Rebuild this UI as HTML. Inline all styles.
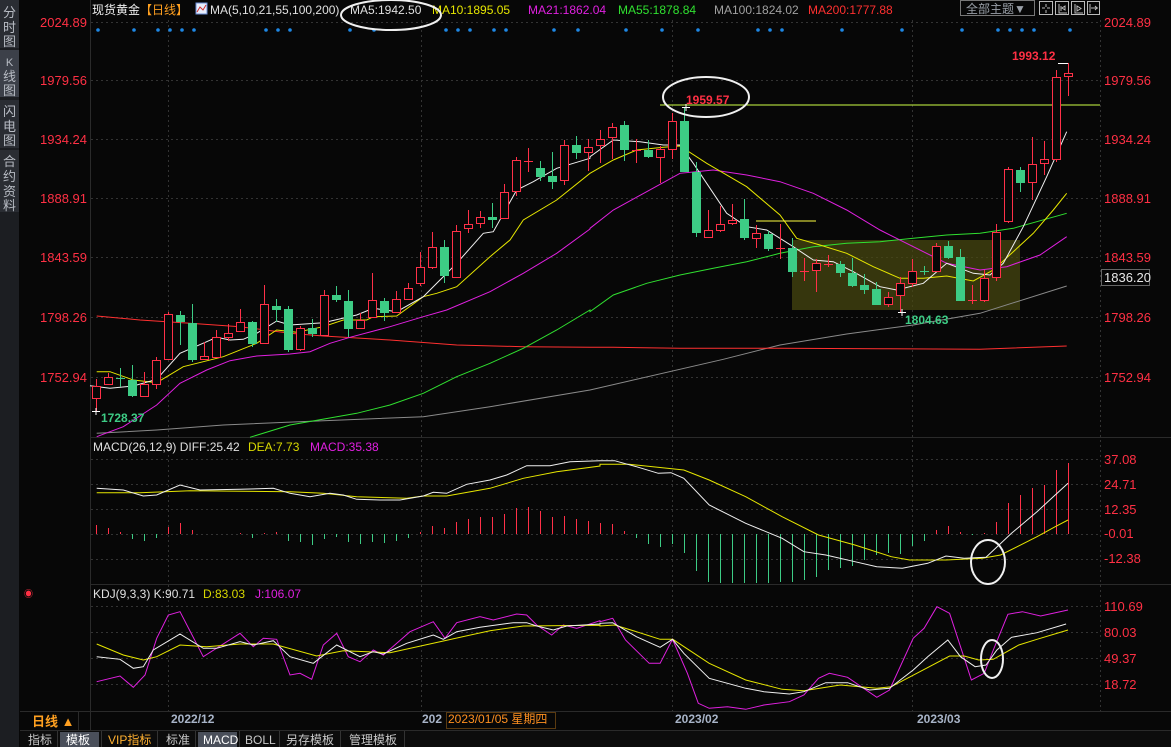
<!DOCTYPE html>
<html><head><meta charset="utf-8">
<style>
html,body{margin:0;padding:0;background:#070707;width:1171px;height:747px;overflow:hidden;font-family:"Liberation Sans","Noto Sans CJK SC",sans-serif}
svg{position:absolute;left:0;top:0}
text{font-family:"Liberation Sans","Noto Sans CJK SC",sans-serif}
</style></head><body>
<svg id="s" width="1171" height="747" viewBox="0 0 1171 747" xmlns="http://www.w3.org/2000/svg">
<rect width="1171" height="747" fill="#070707"/>
<!-- left strip -->
<rect x="0" y="0" width="19" height="747" fill="#1c1e22"/>
<rect x="0" y="0" width="19" height="48" fill="#2a2d33"/>
<rect x="0" y="50" width="19" height="47" fill="#3c4049"/>
<rect x="0" y="100" width="19" height="48" fill="#2a2d33"/>
<rect x="0" y="150" width="19" height="62" fill="#2a2d33"/>
<g fill="#b8bcc4" font-size="13" text-anchor="middle">
<text x="9.5" y="17">分</text><text x="9.5" y="32">时</text><text x="9.5" y="46">图</text>
<text x="9.5" y="66" font-size="11">K</text><text x="9.5" y="81">线</text><text x="9.5" y="95">图</text>
<text x="9.5" y="116">闪</text><text x="9.5" y="131">电</text><text x="9.5" y="145">图</text>
<text x="9.5" y="166">合</text><text x="9.5" y="181">约</text><text x="9.5" y="196">资</text><text x="9.5" y="210">料</text>
</g>
<!-- borders -->
<line x1="90.5" y1="0" x2="90.5" y2="731" stroke="#2a2a2a"/>
<line x1="90" y1="437.5" x2="1171" y2="437.5" stroke="#2a2a2a"/>
<line x1="90" y1="584.5" x2="1171" y2="584.5" stroke="#2a2a2a"/>
<line x1="20" y1="711.5" x2="1171" y2="711.5" stroke="#2a2a2a"/>
<line x1="20" y1="730.5" x2="1171" y2="730.5" stroke="#2a2a2a"/>
<g id="grid" stroke="#333" stroke-dasharray="2,3"></g>
<g id="main"></g>
<!-- y labels -->
<g fill="#ff3044" font-size="13">
<text x="87" y="27" text-anchor="end">2024.89</text>
<text x="87" y="85" text-anchor="end">1979.56</text>
<text x="87" y="144" text-anchor="end">1934.24</text>
<text x="87" y="203" text-anchor="end">1888.91</text>
<text x="87" y="262" text-anchor="end">1843.59</text>
<text x="87" y="322" text-anchor="end">1798.26</text>
<text x="87" y="382" text-anchor="end">1752.94</text>
<text x="1104" y="27">2024.89</text>
<text x="1104" y="85">1979.56</text>
<text x="1104" y="144">1934.24</text>
<text x="1104" y="203">1888.91</text>
<text x="1104" y="262">1843.59</text>
<text x="1104" y="322">1798.26</text>
<text x="1104" y="382">1752.94</text>
<text x="1104" y="464">37.08</text>
<text x="1104" y="489">24.71</text>
<text x="1104" y="514">12.35</text>
<text x="1104" y="538">-0.01</text>
<text x="1104" y="563">-12.38</text>
<text x="1104" y="611">110.69</text>
<text x="1104" y="637">80.03</text>
<text x="1104" y="663">49.37</text>
<text x="1104" y="689">18.72</text>
</g>
<rect x="1101.5" y="269.5" width="48" height="16" fill="#070707" stroke="#666"/>
<text x="1104" y="282" fill="#e8e8e8" font-size="13">1836.20</text>
<!-- header -->
<text x="92" y="14" fill="#f0f0f0" font-size="12">现货黄金</text>
<text x="140" y="14" fill="#ffa020" font-size="12">【日线】</text>
<rect x="196" y="3" width="11" height="11" fill="#e8eefc" stroke="#6b8ed6"/>
<polyline points="197,12 200,7 203,10 206,5" fill="none" stroke="#d03030" stroke-width="1"/>
<text x="210" y="14" fill="#e0e0e0" font-size="12">MA(5,10,21,55,100,200)</text>
<text x="350" y="14" fill="#e0e0e0" font-size="12">MA5:1942.50</text>
<text x="432" y="14" fill="#e6e600" font-size="12">MA10:1895.05</text>
<text x="528" y="14" fill="#e020e0" font-size="12">MA21:1862.04</text>
<text x="618" y="14" fill="#30e030" font-size="12">MA55:1878.84</text>
<text x="714" y="14" fill="#a0a0a0" font-size="12">MA100:1824.02</text>
<text x="808" y="14" fill="#ff3030" font-size="12">MA200:1777.88</text>
<ellipse cx="391" cy="15" rx="50" ry="15" fill="none" stroke="#f0f0f0" stroke-width="2"/>
<!-- top right -->
<rect x="960.5" y="0.5" width="74" height="15" fill="none" stroke="#777"/>
<text x="966" y="13" fill="#9aa0a8" font-size="12">全部主题▼</text>
<g fill="none" stroke="#bbb">
<rect x="1039.5" y="1.5" width="13" height="13"/><rect x="1055.5" y="1.5" width="13" height="13"/><rect x="1071.5" y="1.5" width="13" height="13"/><rect x="1087.5" y="1.5" width="12" height="13"/>
<path d="M1046 4v3M1046 10v3M1042 8h3M1047 8h3M1059 4v9h8M1061 6v5M1062 8l3-2v4zM1075 4v9h8M1077 6v5l4-2.5zM1090 4v9M1091 8h7M1095 6l2 2-2 2"/>
</g>
<text x="101" y="422" fill="#3dcc85" font-size="12" font-weight="bold">1728.37</text>
<text x="686" y="104" fill="#ff3044" font-size="12" font-weight="bold">1959.57</text>
<text x="1012" y="60" fill="#ff3044" font-size="12" font-weight="bold">1993.12</text>
<text x="905" y="324" fill="#3dcc85" font-size="12" font-weight="bold">1804.63</text>
<ellipse cx="706" cy="97" rx="43" ry="20" fill="none" stroke="#f0f0f0" stroke-width="2"/>
<!-- indicator labels -->
<text x="93" y="451" fill="#e0e0e0" font-size="12">MACD(26,12,9) DIFF:25.42</text>
<text x="248" y="451" fill="#d8d800" font-size="12">DEA:7.73</text>
<text x="310" y="451" fill="#e020e0" font-size="12">MACD:35.38</text>
<text x="93" y="598" fill="#e0e0e0" font-size="12">KDJ(9,3,3) K:90.71</text>
<text x="203" y="598" fill="#d8d800" font-size="12">D:83.03</text>
<text x="255" y="598" fill="#e020e0" font-size="12">J:106.07</text>
<text x="24" y="597" fill="#ff3044" font-size="9">◉</text>
<ellipse cx="988" cy="562" rx="17" ry="22" fill="none" stroke="#f0f0f0" stroke-width="2"/>
<ellipse cx="992" cy="659" rx="11" ry="19" fill="none" stroke="#f0f0f0" stroke-width="2"/>
<!-- bottom -->
<text x="32" y="726" fill="#ffa020" font-size="13" font-weight="bold">日线 ▲</text>
<line x1="78.5" y1="712" x2="78.5" y2="730" stroke="#2a2a2a"/>
<text x="171" y="723" fill="#a8b4c8" font-size="12" font-weight="bold">2022/12</text>
<text x="422" y="723" fill="#a8b4c8" font-size="12" font-weight="bold">202</text>
<rect x="446.5" y="712.5" width="109" height="16" fill="#070707" stroke="#5a3a10"/>
<text x="448" y="723" fill="#ff9020" font-size="12">2023/01/05 星期四</text>
<text x="675" y="723" fill="#a8b4c8" font-size="12" font-weight="bold">2023/02</text>
<text x="917" y="723" fill="#a8b4c8" font-size="12" font-weight="bold">2023/03</text>
<rect x="20" y="731" width="1151" height="16" fill="#0c0c0c"/>
<rect x="60" y="732" width="39" height="15" fill="#4a4f5a"/>
<rect x="198" y="732" width="39" height="15" fill="#4a4f5a"/>
<g font-size="12" fill="#c8c8c8">
<text x="28" y="744">指标</text>
<text x="66" y="744" fill="#fff">模板</text>
<text x="108" y="744" fill="#ffb030" font-family="Liberation Mono,Noto Sans CJK SC,monospace">VIP指标</text>
<text x="166" y="744">标准</text>
<text x="203" y="744" fill="#fff" font-family="Liberation Mono,monospace">MACD</text>
<text x="245" y="744" font-family="Liberation Mono,monospace">BOLL</text>
<text x="286" y="744">另存模板</text>
<text x="349" y="744">管理模板</text>
</g>
<g stroke="#333"><line x1="57.5" y1="731" x2="57.5" y2="747"/><line x1="101.5" y1="731" x2="101.5" y2="747"/><line x1="157.5" y1="731" x2="157.5" y2="747"/><line x1="195.5" y1="731" x2="195.5" y2="747"/><line x1="239.5" y1="731" x2="239.5" y2="747"/><line x1="279.5" y1="731" x2="279.5" y2="747"/><line x1="340.5" y1="731" x2="340.5" y2="747"/><line x1="404.5" y1="731" x2="404.5" y2="747"/></g>
</svg>
<script>
var S='';
function pl(pts,c,w){S+='<polyline points="'+pts.map(p=>p[0].toFixed(1)+','+p[1].toFixed(1)).join(' ')+'" fill="none" stroke="'+c+'" stroke-width="'+(w||1)+'"/>';}
function z(arr,ox,oy,sx,sy){return arr.map(p=>[ox+p[0]/sx,oy+p[1]/(sy||sx)]);}
// grid
var g='';
[22,80,139,198,257,317,377,459,484,509,534,559,606,632,658,684].forEach(y=>{g+='<line x1="91" y1="'+(y+.5)+'" x2="1100" y2="'+(y+.5)+'"/>';});
[168,421,672,912].forEach(x=>{g+='<line x1="'+(x+.5)+'" y1="20" x2="'+(x+.5)+'" y2="711"/>';});
g+='<line x1="1100.5" y1="20" x2="1100.5" y2="711"/>';
document.getElementById('grid').innerHTML=g;
// blue dots
[98,134,158,170,182,194,266,278,290,350,374,446,458,470,494,506,554,578,626,662,698,758,770,782,842,902,962,998,1010,1022,1034,1070].forEach(x=>{S+='<circle cx="'+x+'" cy="30" r="1.8" fill="#1e88e5"/>';});
// box
S+='<rect x="792" y="240" width="228" height="70" fill="#4a4a10" fill-opacity="0.7"/>';
// MAs
pl(z([[20,1000],[200,990],[400,975],[700,962],[1000,950],[1200,920],[1500,870]],90,100,3).concat(z([[430,898],[600,855],[800,822],[1000,795],[1200,760],[1460,678]],580,60,3)).filter((p,i,a)=>i==0||p[0]>a[i-1][0]),'#8a8a8a');
pl(z([[20,648],[150,660],[300,670],[450,680],[600,700],[700,708],[900,720],[1100,735],[1300,740],[1500,742]],90,100,3).concat(z([[100,862],[300,865],[600,865],[900,866],[1200,868],[1400,860],[1460,858]],580,60,3)),'#ff3030');
pl(z([[480,1012],[600,975],[800,940],[900,915],[1000,880],[1100,830],[1200,790],[1300,745],[1400,690],[1500,630]],90,100,3).concat(z([[30,755],[100,705],[200,670],[300,645],[400,625],[500,605],[600,580],[700,560],[800,550],[900,545],[1000,535],[1100,525],[1200,520],[1300,505],[1460,460]],580,60,3)),'#30e030');
pl(z([[20,1010],[100,980],[200,915],[270,850],[350,810],[420,782],[500,768],[600,762],[660,755],[720,730],[780,712],[900,680],[1000,650],[1070,630],[1200,575],[1300,520],[1400,460],[1500,387]],90,100,3).concat(z([[30,505],[100,450],[200,395],[300,340],[400,330],[500,345],[600,365],[700,400],[800,450],[900,510],[1000,560],[1100,610],[1200,630],[1280,620],[1380,585],[1460,530]],580,60,3)),'#e020e0');
pl(z([[20,815],[60,815],[130,840],[200,848],[280,800],[400,770],[500,730],[560,690],[620,697],[700,680],[760,660],[830,660],[850,650],[920,648],[1000,590],[1040,580],[1100,560],[1200,470],[1260,420],[1300,360],[1400,300],[1500,220]],90,100,3).concat(z([[30,340],[100,300],[170,270],[250,262],[300,258],[380,310],[500,380],[600,465],[650,535],[720,555],[800,580],[880,620],[960,655],[1030,655],[1100,648],[1180,663],[1240,630],[1300,575],[1360,520],[1420,450],[1460,400]],580,60,3)),'#e6e600');
pl(z([[0,857],[60,865],[130,858],[200,838],[270,760],[350,725],[380,712],[420,720],[460,718],[500,700],[560,663],[600,675],[700,668],[800,645],[850,625],[920,635],[1000,590],[1050,540],[1100,490],[1180,400],[1210,395],[1280,270],[1330,245],[1400,205],[1500,175]],90,100,3).concat(z([[30,290],[100,240],[180,245],[250,255],[300,255],[340,310],[440,460],[500,500],[560,510],[640,560],[700,600],[760,605],[820,635],[900,680],[950,690],[1030,670],[1100,610],[1180,640],[1230,645],[1270,610],[1330,500],[1400,350],[1460,215]],580,60,3)),'#f0f0f0');
// horizontal lines
S+='<line x1="660" y1="105" x2="1100" y2="105" stroke="#ccff44" stroke-width="1"/>';
S+='<line x1="756" y1="221" x2="816" y2="221" stroke="#ffff40" stroke-width="1"/>';
S+='<line x1="1058" y1="63.5" x2="1068" y2="63.5" stroke="#fff"/>';
// candles [x,top,bot,hi,lo,c]
var C=[[96,386,398,379,412,'r'],[108,377,384,373,385,'r'],[120,378,378,368,387,'g'],[132,380,395,365,397,'g'],[144,384,396,372,397,'r'],[156,360,384,357,389,'r'],[168,314,359,312,360,'r'],[180,315,321,311,345,'g'],[192,323,359,304,362,'g'],[204,356,359,342,360,'r'],[216,337,357,330,358,'r'],[228,333,337,324,341,'r'],[240,322,331,309,332,'r'],[252,322,343,321,347,'g'],[264,304,343,285,344,'r'],[276,306,309,299,322,'g'],[288,309,349,306,352,'g'],[300,328,349,326,351,'r'],[312,328,333,319,337,'g'],[324,295,335,290,336,'r'],[336,295,299,286,302,'g'],[348,301,328,290,337,'g'],[360,320,328,313,329,'r'],[372,300,317,273,317,'r'],[384,301,312,298,321,'g'],[396,299,312,291,313,'r'],[408,288,299,283,299,'r'],[420,267,283,252,286,'r'],[432,247,267,232,269,'r'],[444,247,275,240,283,'g'],[456,231,277,225,277,'r'],[468,224,228,210,233,'r'],[480,217,223,211,228,'r'],[492,217,219,203,228,'g'],[504,192,218,184,219,'r'],[516,160,191,157,196,'r'],[528,161,161,148,172,'r'],[540,168,176,161,181,'g'],[552,176,181,152,189,'g'],[564,145,180,140,185,'r'],[576,145,152,136,159,'g'],[588,147,152,139,171,'r'],[600,139,145,130,163,'r'],[612,127,137,123,159,'r'],[624,125,149,121,161,'g'],[636,150,150,139,163,'r'],[648,150,156,140,158,'g'],[660,149,157,146,183,'r'],[672,121,149,113,159,'r'],[684,121,171,107,171,'g'],[696,172,232,162,237,'g'],[708,230,237,210,238,'r'],[720,224,230,206,232,'r'],[732,220,223,204,225,'r'],[744,219,237,199,240,'g'],[756,233,238,225,248,'r'],[768,234,248,231,251,'g'],[780,248,248,224,259,'r'],[792,248,271,238,277,'g'],[804,271,271,258,281,'r'],[816,263,270,259,292,'r'],[828,264,264,255,267,'r'],[840,264,272,261,277,'g'],[852,273,285,258,287,'g'],[864,285,289,274,294,'g'],[876,289,304,282,305,'g'],[888,297,304,292,307,'r'],[900,283,295,277,312,'r'],[912,271,283,259,287,'r'],[924,271,271,266,275,'g'],[936,246,271,243,272,'r'],[948,246,257,241,259,'g'],[960,257,300,249,300,'g'],[972,300,300,285,304,'r'],[984,278,300,270,302,'r'],[996,232,277,224,281,'r'],[1008,169,221,167,223,'r'],[1020,170,182,167,192,'g'],[1032,164,182,137,200,'r'],[1044,159,163,141,175,'r'],[1056,77,159,70,162,'r'],[1068,73,76,63,96,'r']];
C.forEach(c=>{var x=c[0],col=c[5]=='r'?'#ff3048':'#3dcc85';
S+='<line x1="'+(x+.5)+'" y1="'+c[3]+'" x2="'+(x+.5)+'" y2="'+c[4]+'" stroke="'+col+'"/>';
if(c[1]==c[2]){S+='<line x1="'+(x-4)+'" y1="'+(c[1]+.5)+'" x2="'+(x+5)+'" y2="'+(c[1]+.5)+'" stroke="'+col+'"/>';}
else if(c[5]=='r'){S+='<rect x="'+(x-3.5)+'" y="'+(c[1]+.5)+'" width="8" height="'+(c[2]-c[1])+'" fill="#070707" stroke="'+col+'"/>';}
else{S+='<rect x="'+(x-4)+'" y="'+c[1]+'" width="9" height="'+(c[2]-c[1]+1)+'" fill="'+col+'"/>';}});
S+='<path d="M92 411.5h8M96 408v7M898 312.5h8M902 309v7M682 107.5h8M686 104v7" stroke="#fff"/>';
// MACD bars
var B=[[96,525],[108,528],[120,532],[132,539],[144,541],[156,538],[168,527],[180,523],[192,530],[204,534],[216,534],[228,534],[240,533],[252,538],[264,533],[276,532],[288,541],[300,542],[312,545],[324,539],[336,537],[348,542],[360,544],[372,542],[384,543],[396,541],[408,538],[420,532],[432,526],[444,528],[456,522],[468,519],[480,517],[492,517],[504,514],[516,508],[528,507],[540,511],[552,517],[564,516],[576,519],[588,521],[600,523],[612,524],[624,531],[636,538],[648,544],[660,547],[672,544],[684,553],[696,571],[708,582],[720,583],[732,583],[744,583],[756,583],[768,583],[780,582],[792,582],[804,580],[816,577],[828,570],[840,568],[852,566],[864,560],[876,555],[888,553],[900,554],[912,546],[924,541],[936,530],[948,526],[960,532],[972,535],[984,533],[996,522],[1008,503],[1020,495],[1032,488],[1044,485],[1056,470],[1068,463]];
B.forEach(b=>{var col=b[1]<534?'#ff3048':'#3dcc85';if(b[1]==534)return;S+='<line x1="'+(b[0]+.5)+'" y1="534" x2="'+(b[0]+.5)+'" y2="'+b[1]+'" stroke="'+col+'"/>';});
var k=2.746;
pl(z([[20,158],[150,158],[300,152],[600,155],[700,160],[800,170],[950,175],[1000,168],[1070,168],[1200,145],[1300,115],[1400,95],[1530,78]],90,440,3).concat(z([[0,73],[80,73],[230,90],[300,120],[400,170],[500,230],[600,285],[700,315],[800,350],[850,360],[950,360],[1050,355],[1100,345],[1200,290],[1250,260],[1285,240]],600,440,k,3)),'#e6e600');
pl(z([[20,145],[100,150],[160,168],[200,165],[270,135],[330,150],[450,148],[550,145],[600,160],[660,170],[720,160],[760,165],[800,178],[870,180],[930,180],[1000,168],[1030,157],[1070,160],[1130,133],[1200,120],[1250,105],[1310,77],[1380,77],[1440,65],[1530,62]],90,440,3).concat(z([[0,62],[40,62],[100,80],[160,100],[195,98],[230,115],[300,195],[400,250],[500,295],[560,335],[620,345],[700,365],[760,380],[830,385],[900,370],[950,348],[1000,355],[1060,352],[1130,280],[1200,215],[1285,130]],600,440,k,3)),'#f0f0f0');
// KDJ
pl(z([[20,725],[90,708],[130,742],[165,705],[200,595],[235,525],[270,515],[340,650],[450,580],[490,620],[520,595],[560,598],[600,705],[630,700],[665,718],[700,615],[740,580],[775,650],[810,665],[850,630],[880,645],[960,575],[1030,545],[1065,595],[1100,548],[1170,530],[1210,540],[1280,522],[1310,525],[1340,555],[1385,585],[1420,555],[1460,565],[1530,542]],90,440,3).concat(z([[0,545],[35,535],[70,600],[135,670],[165,670],[199,598],[240,700],[270,790],[300,805],[350,800],[400,808],[450,795],[520,785],[560,765],[600,715],[630,700],[680,712],[760,772],[795,750],[860,595],[890,565],[925,500],[960,520],[1020,720],[1055,700],[1080,630],[1120,523],[1160,515],[1210,528],[1285,510]],600,440,k,3)),'#e020e0');
pl(z([[20,612],[100,645],[160,660],[200,650],[270,615],[350,620],[450,612],[550,612],[680,648],[760,632],[900,638],[1050,605],[1200,572],[1300,558],[1530,556]],90,440,3).concat(z([[0,558],[40,555],[100,575],[165,598],[200,598],[300,670],[400,720],[500,748],[560,752],[660,735],[760,745],[800,740],[870,700],[960,648],[1000,648],[1040,660],[1080,658],[1150,615],[1200,598],[1285,570]],600,440,k,3)),'#e6e600');
pl(z([[20,650],[90,658],[130,685],[160,680],[190,630],[270,582],[340,625],[380,625],[450,605],[490,615],[550,602],[600,650],[670,670],[740,615],[810,650],[850,635],[880,642],[950,610],[1030,585],[1060,598],[1100,575],[1170,562],[1270,548],[1310,548],[1340,558],[1390,570],[1430,558],[1530,552]],90,440,3).concat(z([[0,550],[35,548],[100,590],[165,622],[199,598],[230,640],[300,715],[350,730],[400,745],[450,755],[520,762],[560,755],[620,728],[680,728],[740,750],[795,745],[860,690],[900,650],[955,600],[990,650],[1030,680],[1060,675],[1090,630],[1130,592],[1200,578],[1280,552]],600,440,k,3)),'#f0f0f0');
document.getElementById('main').innerHTML=S;
</script>
</body></html>
